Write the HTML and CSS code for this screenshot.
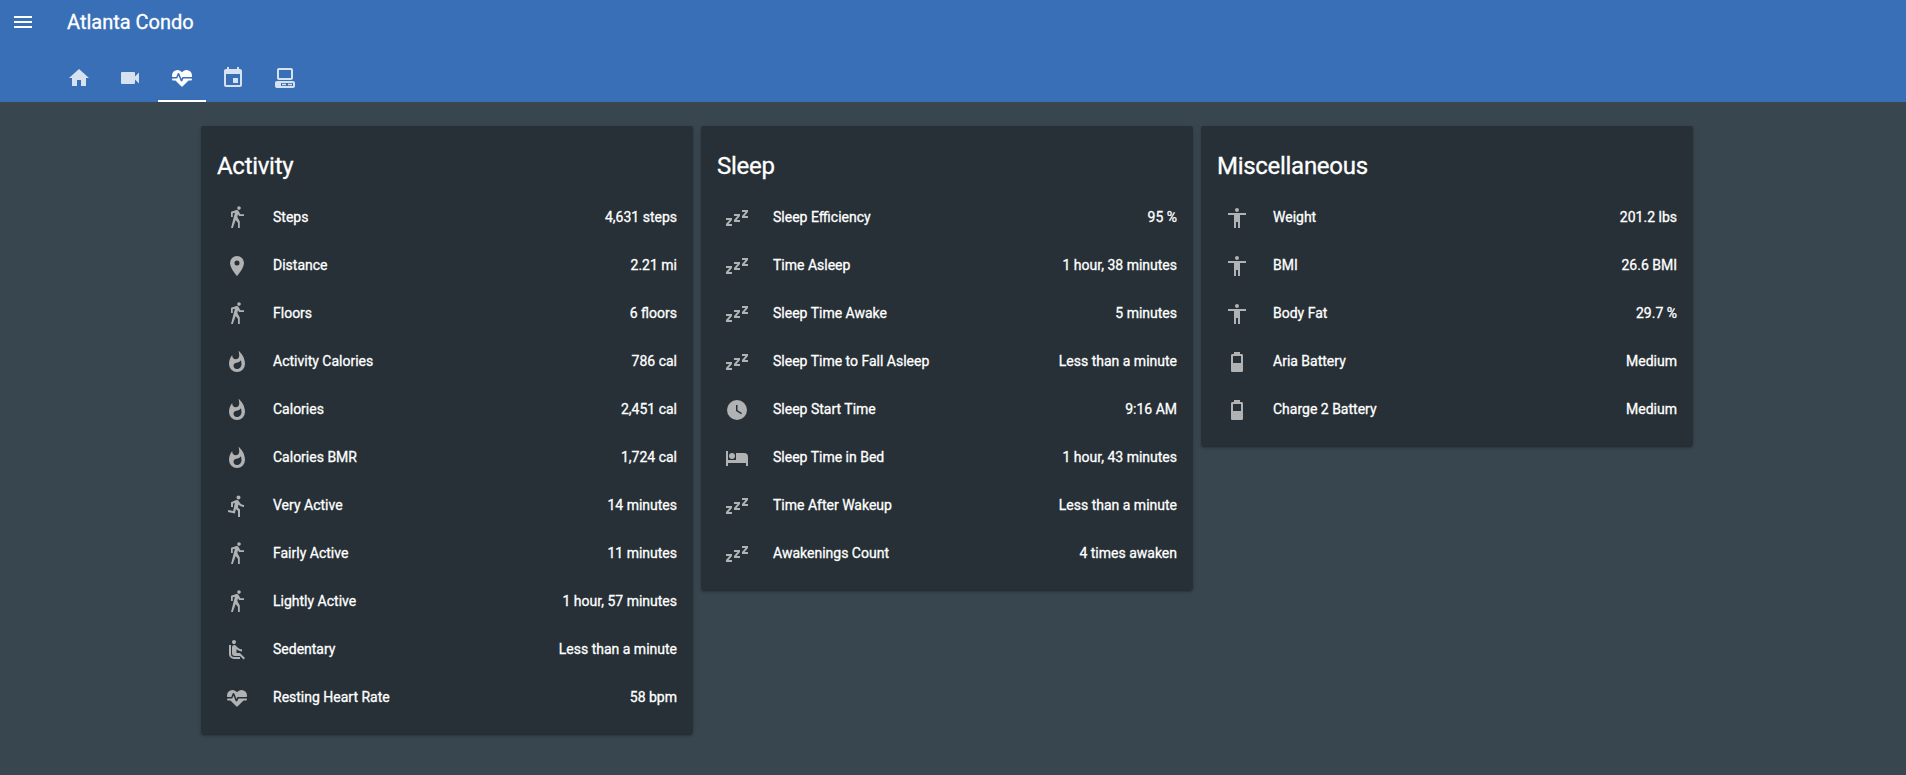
FILE: index.html
```html
<!DOCTYPE html>
<html lang="en">
<head>
<meta charset="utf-8">
<title>Atlanta Condo</title>
<link rel="stylesheet" href="styles.css">
</head>
<body>
<svg class="sprite" aria-hidden="true">
  <symbol id="menu" viewBox="0 0 24 24"><path d="M3 18h18v-2H3v2zm0-5h18v-2H3v2zm0-7v2h18V6H3z"/></symbol>
  <symbol id="home" viewBox="0 0 24 24"><path d="M10,20V14H14V20H19V12H22L12,3L2,12H5V20H10Z"/></symbol>
  <symbol id="video" viewBox="0 0 24 24"><path d="M17,10.5V7A1,1 0 0,0 16,6H4A1,1 0 0,0 3,7V17A1,1 0 0,0 4,18H16A1,1 0 0,0 17,17V13.5L21,17.5V6.5L17,10.5Z"/></symbol>
  <symbol id="heart" viewBox="0 0 24 24"><path d="M7.5,4A5.5,5.5 0 0,0 2,9.5C2,10 2.09,10.5 2.22,11H6.3L7.57,7.63C7.87,6.83 9.05,6.75 9.43,7.63L11.5,13L12.09,11.58C12.22,11.25 12.57,11 13,11H21.78C21.91,10.5 22,10 22,9.5A5.5,5.5 0 0,0 16.5,4C14.64,4 13,4.93 12,6.34C11,4.93 9.36,4 7.5,4V4M3,12.5A1,1 0 0,0 2,13.5A1,1 0 0,0 3,14.5H5.44L11,20C12,20.9 12,20.9 13,20L18.56,14.5H21A1,1 0 0,0 22,13.5A1,1 0 0,0 21,12.5H13.4L12.47,14.8C12.07,15.81 10.92,15.67 10.55,14.83L8.5,9.5L7.54,11.83C7.39,12.21 7.05,12.5 6.6,12.5H3Z"/></symbol>
  <symbol id="calendar" viewBox="0 0 24 24"><path d="M19,19H5V8H19M16,1V3H8V1H6V3H5C3.89,3 3,3.89 3,5V19A2,2 0 0,0 5,21H19A2,2 0 0,0 21,19V5C21,3.89 20.1,3 19,3H18V1M17,12H12V17H17V12Z"/></symbol>
  <symbol id="desktop" viewBox="0 0 24 24"><path fill-rule="evenodd" d="M6,2C4.89,2 4,2.89 4,4V12C4,13.11 4.89,14 6,14H18C19.11,14 20,13.11 20,12V4C20,2.89 19.11,2 18,2H6M6,4H18V12H6V4M4,15C2.89,15 2,15.89 2,17V20C2,21.11 2.89,22 4,22H20C21.11,22 22,21.11 22,20V17C22,15.89 21.11,15 20,15H4M8,17H20V20H8V17M9,17.75V19.25H13V17.75H9M15,17.75V19.25H19V17.75H15Z"/></symbol>
  <symbol id="walk" viewBox="0 0 24 24"><path d="M14.12,10H19V8.2H15.38L13.38,4.87C13.08,4.37 12.54,4.03 11.92,4.03C11.74,4.03 11.58,4.06 11.42,4.11L6,5.8V11H7.8V7.33L9.91,6.67L6,22H7.8L10.67,13.89L13,17V22H14.8V15.59L12.31,11.05L13.04,8.18M14,3.8C15,3.8 15.8,3 15.8,2C15.8,1 15,0.2 14,0.2C13,0.2 12.2,1 12.2,2C12.2,3 13,3.8 14,3.8Z"/></symbol>
  <symbol id="pin" viewBox="0 0 24 24"><path d="M12,11.5A2.5,2.5 0 0,1 9.5,9A2.5,2.5 0 0,1 12,6.5A2.5,2.5 0 0,1 14.5,9A2.5,2.5 0 0,1 12,11.5M12,2A7,7 0 0,0 5,9C5,14.25 12,22 12,22C12,22 19,14.25 19,9A7,7 0 0,0 12,2Z"/></symbol>
  <symbol id="fire" viewBox="0 0 24 24"><path d="M11.71,19C9.93,19 8.5,17.59 8.5,15.86C8.5,14.24 9.53,13.1 11.3,12.74C13.07,12.38 14.9,11.53 15.92,10.16C16.31,11.45 16.5,12.81 16.5,14.2C16.5,16.84 14.36,19 11.71,19M13.5,0.67C13.5,0.67 14.24,3.32 14.24,5.47C14.24,7.53 12.89,9.2 10.83,9.2C8.76,9.2 7.2,7.53 7.2,5.47L7.23,5.1C5.21,7.5 4,10.61 4,14A8,8 0 0,0 12,22A8,8 0 0,0 20,14C20,8.6 17.41,3.8 13.5,0.67Z"/></symbol>
  <symbol id="run" viewBox="0 0 24 24"><path d="M13.5,5.5C14.59,5.5 15.5,4.58 15.5,3.5C15.5,2.38 14.59,1.5 13.5,1.5C12.39,1.5 11.5,2.38 11.5,3.5C11.5,4.58 12.39,5.5 13.5,5.5M9.89,19.38L10.89,15L13,17V23H15V15.5L12.89,13.5L13.5,10.5C14.79,12 16.79,13 19,13V11C17.09,11 15.5,10 14.69,8.58L13.69,7C13.29,6.38 12.69,6 12,6C11.69,6 11.5,6.08 11.19,6.08L6,8.28V13H8V9.58L9.79,8.88L8.19,17L3.29,16L2.89,18L9.89,19.38Z"/></symbol>
  <symbol id="seat" viewBox="0 0 24 24"><path d="M7.59,5.41C6.81,4.63 6.81,3.36 7.59,2.58C8.37,1.8 9.64,1.8 10.42,2.58C11.2,3.36 11.2,4.63 10.42,5.41C9.63,6.2 8.37,6.2 7.59,5.41M6,16V7H4V16A5,5 0 0,0 9,21H15V19H9A3,3 0 0,1 6,16M20,20.07L14.93,15H11.5V11.32C12.9,12.47 15.1,13.5 17,13.5V11.32C15.34,11.34 13.39,10.45 12.33,9.28L10.93,7.73C10.74,7.5 10.5,7.35 10.24,7.23C9.95,7.09 9.62,7 9.28,7H9.25C8,7 7,8 7,9.25V15A3,3 0 0,0 10,18H15.07L18.57,21.5"/></symbol>
  <symbol id="sleep" viewBox="0 0 24 24"><path d="M23,12H17V10L20.39,6H17V4H23V6L19.62,10H23V12M15,16H9V14L12.39,10H9V8H15V10L11.62,14H15V16M7,20H1V18L4.39,14H1V12H7V14L3.62,18H7V20Z"/></symbol>
  <symbol id="clock" viewBox="0 0 24 24"><path d="M12,2A10,10 0 0,0 2,12A10,10 0 0,0 12,22A10,10 0 0,0 22,12A10,10 0 0,0 12,2M16.2,16.2L11,13V7H12.5V12.2L17,14.9L16.2,16.2Z"/></symbol>
  <symbol id="bed" viewBox="0 0 24 24"><path d="M19,7H11V14H3V5H1V20H3V17H21V20H23V11A4,4 0 0,0 19,7M7,13A3,3 0 0,0 10,10A3,3 0 0,0 7,7A3,3 0 0,0 4,10A3,3 0 0,0 7,13Z"/></symbol>
  <symbol id="human" viewBox="0 0 24 24"><path d="M21,9H15V22H13V16H11V22H9V9H3V7H21M12,2A2,2 0 0,1 14,4A2,2 0 0,1 12,6C10.89,6 10,5.1 10,4C10,2.89 10.89,2 12,2Z"/></symbol>
  <symbol id="battery" viewBox="0 0 24 24"><path d="M16,13H8V6H16M16.67,4H15V2H9V4H7.33A1.33,1.33 0 0,0 6,5.33V20.67C6,21.4 6.6,22 7.33,22H16.67A1.33,1.33 0 0,0 18,20.67V5.33C18,4.6 17.4,4 16.67,4Z"/></symbol>
</svg>

<header class="header">
  <div class="toolbar">
    <svg class="icon"><use href="#menu"/></svg>
    <div class="title">Atlanta Condo</div>
  </div>
  <nav class="tabs">
    <a class="tab"><svg class="icon"><use href="#home"/></svg></a>
    <a class="tab"><svg class="icon"><use href="#video"/></svg></a>
    <a class="tab active"><svg class="icon"><use href="#heart"/></svg></a>
    <a class="tab"><svg class="icon"><use href="#calendar"/></svg></a>
    <a class="tab"><svg class="icon"><use href="#desktop"/></svg></a>
  </nav>
</header>

<main class="columns">
  <section class="card">
    <h2 class="card-title">Activity</h2>
    <div class="rows">
      <div class="row"><svg class="icon"><use href="#walk"/></svg><span class="name">Steps</span><span class="value">4,631 steps</span></div>
      <div class="row"><svg class="icon"><use href="#pin"/></svg><span class="name">Distance</span><span class="value">2.21 mi</span></div>
      <div class="row"><svg class="icon"><use href="#walk"/></svg><span class="name">Floors</span><span class="value">6 floors</span></div>
      <div class="row"><svg class="icon"><use href="#fire"/></svg><span class="name">Activity Calories</span><span class="value">786 cal</span></div>
      <div class="row"><svg class="icon"><use href="#fire"/></svg><span class="name">Calories</span><span class="value">2,451 cal</span></div>
      <div class="row"><svg class="icon"><use href="#fire"/></svg><span class="name">Calories BMR</span><span class="value">1,724 cal</span></div>
      <div class="row"><svg class="icon"><use href="#run"/></svg><span class="name">Very Active</span><span class="value">14 minutes</span></div>
      <div class="row"><svg class="icon"><use href="#walk"/></svg><span class="name">Fairly Active</span><span class="value">11 minutes</span></div>
      <div class="row"><svg class="icon"><use href="#walk"/></svg><span class="name">Lightly Active</span><span class="value">1 hour, 57 minutes</span></div>
      <div class="row"><svg class="icon"><use href="#seat"/></svg><span class="name">Sedentary</span><span class="value">Less than a minute</span></div>
      <div class="row"><svg class="icon"><use href="#heart"/></svg><span class="name">Resting Heart Rate</span><span class="value">58 bpm</span></div>
    </div>
  </section>
  <section class="card">
    <h2 class="card-title">Sleep</h2>
    <div class="rows">
      <div class="row"><svg class="icon"><use href="#sleep"/></svg><span class="name">Sleep Efficiency</span><span class="value">95 %</span></div>
      <div class="row"><svg class="icon"><use href="#sleep"/></svg><span class="name">Time Asleep</span><span class="value">1 hour, 38 minutes</span></div>
      <div class="row"><svg class="icon"><use href="#sleep"/></svg><span class="name">Sleep Time Awake</span><span class="value">5 minutes</span></div>
      <div class="row"><svg class="icon"><use href="#sleep"/></svg><span class="name">Sleep Time to Fall Asleep</span><span class="value">Less than a minute</span></div>
      <div class="row"><svg class="icon"><use href="#clock"/></svg><span class="name">Sleep Start Time</span><span class="value">9:16 AM</span></div>
      <div class="row"><svg class="icon"><use href="#bed"/></svg><span class="name">Sleep Time in Bed</span><span class="value">1 hour, 43 minutes</span></div>
      <div class="row"><svg class="icon"><use href="#sleep"/></svg><span class="name">Time After Wakeup</span><span class="value">Less than a minute</span></div>
      <div class="row"><svg class="icon"><use href="#sleep"/></svg><span class="name">Awakenings Count</span><span class="value">4 times awaken</span></div>
    </div>
  </section>
  <section class="card">
    <h2 class="card-title">Miscellaneous</h2>
    <div class="rows">
      <div class="row"><svg class="icon"><use href="#human"/></svg><span class="name">Weight</span><span class="value">201.2 lbs</span></div>
      <div class="row"><svg class="icon"><use href="#human"/></svg><span class="name">BMI</span><span class="value">26.6 BMI</span></div>
      <div class="row"><svg class="icon"><use href="#human"/></svg><span class="name">Body Fat</span><span class="value">29.7 %</span></div>
      <div class="row"><svg class="icon"><use href="#battery"/></svg><span class="name">Aria Battery</span><span class="value">Medium</span></div>
      <div class="row"><svg class="icon"><use href="#battery"/></svg><span class="name">Charge 2 Battery</span><span class="value">Medium</span></div>
    </div>
  </section>
</main>
</body>
</html>
```
FILE: styles.css
```css
* { box-sizing: border-box; }

body {
  margin: 0;
  min-height: 100vh;
  background: #38464f;
  color: #fff;
  font: 400 14px/20px Roboto, "Noto Sans", sans-serif;
  -webkit-text-stroke: .3px currentColor;
}

.sprite { display: none; }

.icon {
  display: block;
  flex: none;
  width: 24px;
  height: 24px;
  fill: currentColor;
}

.header {
  height: 102px;
  background: #396fb7;
}

.toolbar {
  display: flex;
  align-items: center;
  gap: 32px;
  height: 54px;
  padding: 0 11px 10px;
}

.title {
  font-size: 20px;
  line-height: 24px;
}

.tabs {
  display: flex;
  gap: 3.4px;
  height: 48px;
  padding-left: 55px;
}

.tab {
  display: flex;
  justify-content: center;
  width: 48px;
  padding-top: 12px;
  color: rgba(255, 255, 255, .8);
}

.tab.active {
  color: #fff;
  border-bottom: 2px solid #fff;
}

.columns {
  display: grid;
  grid-template-columns: repeat(3, 492px);
  justify-content: center;
  align-items: start;
  gap: 8px;
  padding: 24px 12px 0 0;
}

.card {
  padding: 20px 16px 16px;
  border-radius: 2px;
  background: #263036;
  box-shadow: 0 2px 2px 0 rgba(0, 0, 0, .14), 0 1px 5px 0 rgba(0, 0, 0, .12), 0 3px 1px -2px rgba(0, 0, 0, .2);
}

.card-title {
  margin: 0 0 12px;
  font-size: 24px;
  font-weight: 400;
  line-height: 40px;
  letter-spacing: -.012em;
}

.rows {
  display: grid;
  gap: 8px;
}

.row {
  display: flex;
  align-items: center;
  height: 40px;
  padding-left: 8px;
}

.row .icon { color: #b0b2b3; }

.name,
.value { padding-bottom: 2px; }

.name {
  flex: 1;
  padding-left: 24px;
}
```
